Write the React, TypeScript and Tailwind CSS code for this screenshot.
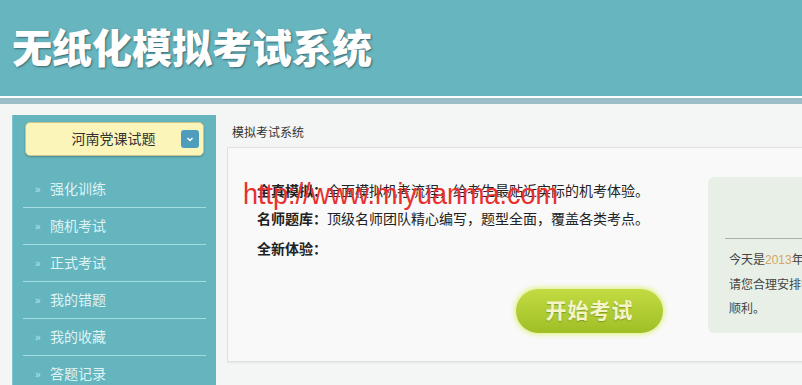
import React from 'react';

const cn = "font-['Liberation_Sans','Noto_Sans_CJK_SC',sans-serif]";

const menu = ['强化训练', '随机考试', '正式考试', '我的错题', '我的收藏', '答题记录'];

const Sidebar: React.FC = () => (
  <div className="w-[204px] shrink-0 bg-[#65b5bf] border-l border-[#7fc6ce] pt-[7px]">
    <div className="mx-[12px] h-[34px] rounded-[5px] bg-[#fbf5b9] border border-[#c8c690] shadow-[0_1px_2px_rgba(0,0,0,0.25)] flex items-center relative">
      <span className="flex-1 text-center text-[14px] text-[#333] pr-[2px]">河南党课试题</span>
      <span className="absolute right-[4px] top-[7px] w-[18px] h-[18px] rounded-[3px] bg-[#4f9dbc] flex items-center justify-center">
        <svg width="10" height="10" viewBox="0 0 10 10">
          <path d="M2.5 4 L5 6.5 L7.5 4" stroke="#ffffff" strokeWidth="1.5" fill="none" />
        </svg>
      </span>
    </div>
    <ul className="mt-[15px] px-[10px]">
      {menu.map((m) => (
        <li key={m} className="h-[37px] border-b border-[#a2dde2] flex items-center text-[14px] text-[#dff3f3]">
          <span className="w-[27px] pl-[12px] text-[10px] text-[#bfe6ea]">»</span>
          <span>{m}</span>
        </li>
      ))}
    </ul>
  </div>
);

const Panel: React.FC = () => (
  <div className="flex-1 pt-[10px] overflow-hidden">
    <div className="pl-[5px] text-[12px] text-[#333] leading-[16px]">模拟考试系统</div>
    <div className="mt-[6px] w-[640px] h-[215px] bg-[#f9f9f9] border border-[#e0e0e0] shadow-[0_1px_2px_rgba(0,0,0,0.06)] flex">
      <div className="w-[480px] shrink-0 pl-[29px] pt-[29px] text-[14px] text-[#222]">
        <p className="leading-[28px]"><b>全真模拟：</b>全面模拟机考流程，给考生最贴近实际的机考体验。</p>
        <p className="leading-[28px]"><b>名师题库：</b>顶级名师团队精心编写，题型全面，覆盖各类考点。</p>
        <p className="leading-[28px] mt-[2px]"><b>全新体验：</b></p>
        <button className="mt-[26px] ml-[259px] w-[147px] h-[44px] rounded-full bg-gradient-to-b from-[#c3db42] to-[#9fbf25] shadow-[0_0_4px_2px_rgba(222,240,120,0.8)] text-[21px] font-bold text-[#f3f5c8] tracking-[1px] [text-shadow:0_1px_1px_rgba(90,110,20,0.5)]">
          开始考试
        </button>
      </div>
      <div className="mt-[29px] w-[200px] h-[156px] rounded-[6px] bg-[#e8efe6] pl-[17px] pt-[61px]">
        <div className="border-t border-[#a8b0a8]" />
        <div className="pl-[4px] pt-[9px] text-[12px] text-[#444] leading-[24.5px] whitespace-nowrap">
          <p>今天是<span className="text-[#d4a665]">2013</span>年10月15日</p>
          <p>请您合理安排学习时间，祝您考试</p>
          <p>顺利。</p>
        </div>
      </div>
    </div>
  </div>
);

export default function App() {
  return (
    <div className={`${cn} relative w-full h-[385px] overflow-hidden bg-[#f4f5f5]`}>
      <div className="h-[96px] bg-[#67b5bf] flex items-center pl-[12px] pt-[2px]">
        <h1 className="text-[40px] font-black text-white leading-none [text-shadow:1px_1px_2px_rgba(40,70,75,0.7)]">无纸化模拟考试系统</h1>
      </div>
      <div className="h-[2px] bg-white" />
      <div className="h-[6px] bg-[#9bbdc6]" />
      <div className="flex pl-[12px] pt-[11px] gap-[11px] h-[281px]">
        <Sidebar />
        <Panel />
      </div>
      <div className="absolute left-[243px] top-[180px] origin-top scale-y-110 text-[27px] text-[#e8312f] font-['Liberation_Sans',sans-serif] leading-none pointer-events-none">
        http://www.miyuanma.com
      </div>
    </div>
  );
}
